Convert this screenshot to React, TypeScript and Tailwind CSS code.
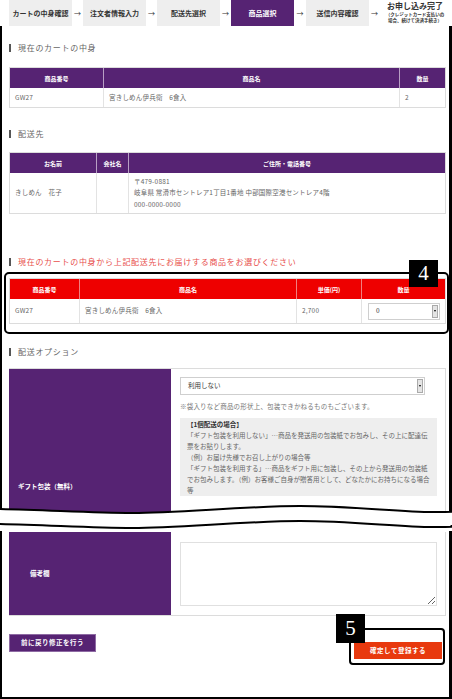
import React from 'react';

const font = { fontFamily: '"Noto Sans CJK JP", "Noto Sans", sans-serif' };

function Heading({ children, red }: { children: React.ReactNode; red?: boolean }) {
  return (
    <div className="flex items-center h-[12px] pl-[7px]">
      <span className="w-[2px] h-[8px] bg-[#555] mr-[7px]" />
      <span className={`text-[8px] tracking-[0.7px] ${red ? 'text-[#e8504c]' : 'text-[#666]'}`}>{children}</span>
    </div>
  );
}

function Step({ label, active }: { label: string; active?: boolean }) {
  return (
    <div
      className={`w-[63px] h-[26px] flex items-center justify-center text-[7px] font-bold ${
        active ? 'bg-[#562373] text-white' : 'bg-[#eeeeee] text-[#333]'
      }`}
    >
      {label}
    </div>
  );
}

function Arrow() {
  return <div className="w-[11px] h-[26px] flex items-center justify-center text-[7px] text-[#333]">→</div>;
}

function SelectBox({ value, className }: { value: string; className: string }) {
  return (
    <div className={`relative flex items-center border border-[#cfcfcf] bg-white ${className}`}>
      <span className="pl-[7px] text-[6.5px] text-[#333]">{value}</span>
      <div className="absolute right-[1px] top-[1px] bottom-[1px] w-[6px] bg-[#e4e4e4] border border-[#aaa] flex items-center justify-center">
        <span className="block w-0 h-0 border-l-[1.5px] border-r-[1.5px] border-t-[2px] border-l-transparent border-r-transparent border-t-black" />
      </div>
    </div>
  );
}

export default function App() {
  const th = 'h-[20px] text-[6px] font-bold text-white text-center border-r border-[#b89fc4] last:border-r-0';
  const td = 'text-[6.5px] text-[#666] tracking-[0.2px] pl-[5px] border-r border-[#e3e3e3] last:border-r-0';

  return (
    <div className="w-[452px] h-[699px] bg-white overflow-hidden" style={font}>
      {/* steps */}
      <div className="flex h-[26px] pl-[9px]">
        <Step label="カートの中身確認" />
        <Arrow />
        <Step label="注文者情報入力" />
        <Arrow />
        <Step label="配送先選択" />
        <Arrow />
        <Step label="商品選択" active />
        <div className="w-[12px] h-[26px] flex items-center justify-center text-[7px] text-[#333]">→</div>
        <Step label="送信内容確認" />
        <Arrow />
        <div className="w-[70px] flex flex-col items-center pt-[1px]">
          <span className="text-[8px] font-bold text-[#333] leading-[10px]">お申し込み完了</span>
          <span className="text-[4.5px] font-bold text-[#333] leading-[6px]">（クレジットカード支払いの</span>
          <span className="text-[4.5px] font-bold text-[#333] leading-[6px]">場合、続けて決済手続き）</span>
        </div>
      </div>

      {/* frame */}
      <div className="h-[673px] border-l-2 border-r-[3px] border-b-2 border-black pt-[16px]">
        <Heading>現在のカートの中身</Heading>
        <div className="mt-[13px] ml-[7px] w-[437px] border border-[#dcdcdc]">
          <div className="grid grid-cols-[94px_296px_1fr] bg-[#562373]">
            <div className={`${th} flex items-center justify-center`}>商品番号</div>
            <div className={`${th} flex items-center justify-center`}>商品名</div>
            <div className={`${th} flex items-center justify-center`}>数量</div>
          </div>
          <div className="grid grid-cols-[94px_296px_1fr] h-[19px] items-stretch">
            <div className={`${td} flex items-center`}>GW27</div>
            <div className={`${td} flex items-center`}>宮きしめん伊兵衛　6食入</div>
            <div className={`${td} flex items-center`}>2</div>
          </div>
        </div>

        <div className="mt-[20px]">
          <Heading>配送先</Heading>
        </div>
        <div className="mt-[12px] ml-[7px] w-[437px] border border-[#dcdcdc]">
          <div className="grid grid-cols-[87px_32px_1fr] bg-[#562373]">
            <div className={`${th} flex items-center justify-center`}>お名前</div>
            <div className={`${th} flex items-center justify-center`}>会社名</div>
            <div className={`${th} flex items-center justify-center`}>ご住所・電話番号</div>
          </div>
          <div className="grid grid-cols-[87px_32px_1fr] h-[40px]">
            <div className={`${td} flex items-center`}>きしめん　花子</div>
            <div className={td} />
            <div className={`${td} flex flex-col justify-center leading-[11.5px]`}>
              <span className="text-[#666]">〒479-0881</span>
              <span className="text-[#666]">岐阜県 常滑市セントレア1丁目1番地 中部国際空港セントレア4階</span>
              <span className="text-[#666]">000&#8209;0000&#8209;0000</span>
            </div>
          </div>
        </div>

        <div className="mt-[42px]">
          <Heading red>現在のカートの中身から上記配送先にお届けする商品をお選びください</Heading>
        </div>
        <div className="relative mt-[10px] ml-[7px] w-[437px]">
          <div className="border border-[#dcdcdc]">
            <div className="grid grid-cols-[70px_217px_65px_1fr] bg-[#ee0000]">
              <div className={`${th} border-[#f08080] flex items-center justify-center`}>商品番号</div>
              <div className={`${th} border-[#f08080] flex items-center justify-center`}>商品名</div>
              <div className={`${th} border-[#f08080] flex items-center justify-center`}>単価(円)</div>
              <div className={`${th} flex items-center justify-center`}>数量</div>
            </div>
            <div className="grid grid-cols-[70px_217px_65px_1fr] h-[24px]">
              <div className={`${td} flex items-center`}>GW27</div>
              <div className={`${td} flex items-center`}>宮きしめん伊兵衛　6食入</div>
              <div className={`${td} flex items-center`}>2,700</div>
              <div className={`${td} flex items-center`}>
                <SelectBox value="0" className="w-[72px] h-[17px] ml-[1px]" />
              </div>
            </div>
          </div>
          <div className="absolute -left-[5px] -right-[3px] -top-[6px] -bottom-[10px] border-2 border-black rounded-[5px] pointer-events-none" />
          <div
            className="absolute right-[8px] -top-[18px] w-[29px] h-[27px] bg-black text-white flex items-center justify-center text-[21px]"
            style={{ fontFamily: '"Liberation Serif", serif' }}
          >
            4
          </div>
        </div>

        <div className="mt-[22px]">
          <Heading>配送オプション</Heading>
        </div>

        <div className="relative mt-[10px]">
          <div className="ml-[7px] w-[437px] border-t border-r border-[#dcdcdc] h-[146px] overflow-hidden flex">
            <div className="w-[162px] bg-[#562373] flex flex-col pt-[113px] pl-[9px]">
              <span className="text-[6.5px] font-bold text-white">ギフト包装（無料）</span>
            </div>
            <div className="flex-1 pl-[9px] pt-[8px]">
              <SelectBox value="利用しない" className="w-[245px] h-[18px]" />
              <p className="mt-[7px] text-[6.5px] text-[#777] tracking-[0.2px]">
                ※袋入りなど商品の形状上、包装できかねるものもございます。
              </p>
              <div className="mt-[6px] w-[257px] bg-[#eeeeee] px-[7px] pt-[1px] text-[6.5px] leading-[11px] text-[#666]">
                <p className="font-bold text-[#333]">【1個配送の場合】</p>
                <p>「ギフト包装を利用しない」…商品を発送用の包装紙でお包みし、その上に配達伝票をお貼りします。</p>
                <p>（例）お届け先様でお召し上がりの場合等</p>
                <p>「ギフト包装を利用する」…商品をギフト用に包装し、その上から発送用の包装紙でお包みします。（例）お客様ご自身が贈答用として、どなたかにお持ちになる場合等</p>
              </div>
            </div>
          </div>

          <div className="ml-[7px] mt-[18px] w-[437px] border-b border-r border-[#dcdcdc] h-[84px] flex">
            <div className="w-[162px] bg-[#562373] flex items-center pl-[21px]">
              <span className="text-[6.5px] font-bold text-white">備考欄</span>
            </div>
            <div className="flex-1 pl-[9px] pt-[10px] pb-[9px] pr-[8px]">
              <textarea className="w-full h-full border border-[#e0e0e0] bg-white block" />
            </div>
          </div>

          <svg
            className="absolute -left-[2px] top-[132px] pointer-events-none"
            width="452"
            height="34"
            viewBox="0 0 452 34"
          >
            <path
              d="M0,9 C50,10 90,13 133,13 S250,6 300,6 S400,12 433,12 S448,11 452,11 L452,31 L0,31 Z"
              fill="white"
            />
            <path d="M0,9 C50,10 90,13 133,13 S250,6 300,6 S400,12 433,12 S448,11 452,11" fill="none" stroke="black" strokeWidth="2" />
            <path d="M0,24 C50,25 90,28 133,28 S250,21 300,21 S400,27 433,27 S448,26 452,26" fill="none" stroke="black" strokeWidth="2" />
          </svg>
        </div>

        <div className="mt-[18px] px-[7px] flex justify-between items-start">
          <button className="w-[87px] h-[18px] bg-[#562373] border border-[#8e6aa3] text-white text-[6.5px] font-bold tracking-[0.5px]">
            前に戻り修正を行う
          </button>
          <div className="relative">
            <button className="w-[88px] h-[17px] bg-[#e8390e] text-white text-[6.5px] font-bold tracking-[0.5px] mt-[1px]">
              確定して登録する
            </button>
            <div className="absolute -left-[5px] -right-[3px] -top-[6px] -bottom-[6px] border-2 border-black rounded-[4px] pointer-events-none" />
            <div
              className="absolute -left-[18px] -top-[20px] w-[29px] h-[29px] bg-black text-white flex items-center justify-center text-[21px]"
              style={{ fontFamily: '"Liberation Serif", serif' }}
            >
              5
            </div>
          </div>
        </div>
      </div>
    </div>
  );
}
